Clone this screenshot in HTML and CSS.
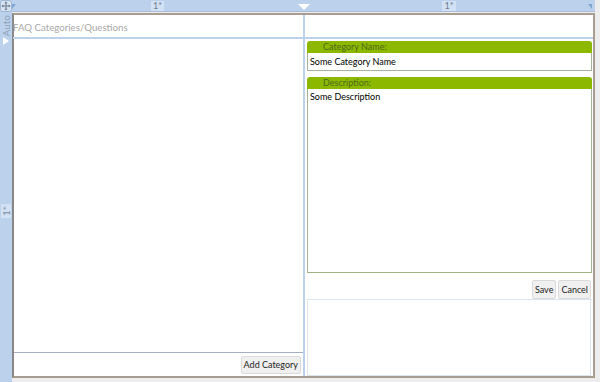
FILE: index.html
```html
<!DOCTYPE html>
<html>
<head>
<meta charset="utf-8">
<link rel="stylesheet" href="styles.css">
</head>
<body>
<div class="designer">
  <div class="corner">
    <svg width="12" height="12" viewBox="0 0 12 12">
      <rect x="0.5" y="0.5" width="11" height="11" rx="2" fill="#d6e3f3" stroke="#9fb6d3"/>
      <path d="M6 2v8M2 6h8" stroke="#6a7a8c" stroke-width="1"/>
      <path d="M6 1.5l-1.6 1.8h3.2zM6 10.5l-1.6-1.8h3.2zM1.5 6l1.8-1.6v3.2zM10.5 6l-1.8-1.6v3.2z" fill="#6a7a8c"/>
    </svg>
  </div>
  <div class="hruler">
    <div class="hcell"><span class="lbl">1*</span></div>
    <div class="hcell"><span class="lbl">1*</span></div>
    <span class="tri tri-start"></span>
    <span class="tri tri-mid"></span>
    <span class="tri tri-end"></span>
  </div>
  <div class="vruler">
    <div class="vcell vauto"><span class="vlbl">Auto</span><span class="vtri"></span></div>
    <div class="vcell vstar"><span class="vlbl">1*</span></div>
  </div>
  <div class="window">
    <div class="wgrid">
      <div class="title">FAQ Categories/Questions</div>
      <div class="title-right"></div>
      <div class="left">
        <div class="list"></div>
        <div class="leftfoot"><button class="btn">Add Category</button></div>
      </div>
      <div class="right">
        <div class="group">
          <div class="ghead">Category Name:</div>
          <div class="gbody short">Some Category Name</div>
        </div>
        <div class="group desc">
          <div class="ghead">Description:</div>
          <div class="gbody tall">Some Description</div>
        </div>
        <div class="actions">
          <button class="btn">Save</button>
          <button class="btn">Cancel</button>
        </div>
        <div class="lower"></div>
      </div>
    </div>
  </div>
</div>
</body>
</html>
```
FILE: styles.css
```css
html, body {
  margin: 0;
  padding: 0;
}
body {
  width: 600px;
  height: 382px;
  background: #ededed;
  font-family: Lato, "Open Sans", sans-serif;
  overflow: hidden;
}
.designer {
  display: grid;
  grid-template-columns: 12px 583px;
  grid-template-rows: 12px 370px;
  width: 600px;
  height: 382px;
}
.corner {
  background: #bcd2ec;
  display: flex;
}
.hruler {
  position: relative;
  background: #bcd2ec;
  border-bottom: 1px solid #aabedb;
  display: grid;
  grid-template-columns: 291px 292px;
  box-sizing: border-box;
}
.hcell {
  display: flex;
  justify-content: center;
  align-items: center;
}
.lbl {
  font-size: 9px;
  line-height: 10px;
  color: #6b7c90;
  background: #d2e1f3;
  padding: 0 2px;
}
.tri {
  position: absolute;
  top: 4px;
  width: 0;
  height: 0;
  border-left: 4px solid transparent;
  border-right: 4px solid transparent;
  border-top: 5px solid #7fa6d3;
}
.tri-mid {
  left: 286px;
  border-left-width: 6px;
  border-right-width: 6px;
  border-top: 6px solid #ffffff;
  top: 4px;
}
.tri-start {
  left: 0;
  border-left: 0;
  border-right: 4px solid transparent;
}
.tri-end {
  left: 576px;
  border-right: 0;
}
.vruler {
  background: #bcd2ec;
  display: grid;
  grid-template-rows: 28px 342px;
}
.vcell {
  display: flex;
  flex-direction: column;
  align-items: center;
  justify-content: center;
}
.vlbl {
  writing-mode: vertical-rl;
  transform: rotate(180deg);
  font-size: 10px;
  color: #7d8ea3;
  line-height: 10px;
}
.vauto {
  justify-content: flex-start;
  padding-top: 3px;
}
.vauto .vlbl {
  color: #8fa2b8;
}
.vtri {
  width: 0;
  height: 0;
  border-top: 4px solid transparent;
  border-bottom: 4px solid transparent;
  border-left: 6px solid #ffffff;
  margin-top: 1px;
}
.vstar .vlbl {
  background: #d2e1f3;
  padding: 2px 0;
}
.window {
  background: #ffffff;
  border: 2px solid #a99c90;
  border-left: 2px solid #8a8886;
  width: 583px;
  height: 365px;
  box-sizing: border-box;
  margin-top: 1px;
}
.wgrid {
  display: grid;
  grid-template-columns: 291px 288px;
  grid-template-rows: 24px 337px;
  height: 100%;
}
.title {
  font-size: 9.7px;
  color: #a8a8a8;
  line-height: 24px;
  border-bottom: 2px solid #bcd2ec;
  border-right: 2px solid #bcd2ec;
  white-space: nowrap;
  margin-left: -1px;
  box-sizing: border-box;
}
.title-right {
  border-bottom: 2px solid #bcd2ec;
}
.left {
  display: flex;
  flex-direction: column;
  border-right: 2px solid #bcd2ec;
}
.list {
  flex: 1;
  border-bottom: 1px solid #a3b1c1;
}
.leftfoot {
  display: flex;
  justify-content: flex-end;
  padding: 3px 2px 2px 0;
}
.btn {
  font-family: Lato, "Open Sans", sans-serif;
  font-size: 9px;
  color: #222;
  background: #f0f0f0;
  border: 1px solid #dadada;
  border-radius: 2px;
  padding: 0 2px;
  height: 18px;
  line-height: 16px;
  margin: 0;
}
.right {
  display: flex;
  flex-direction: column;
  padding: 2px 1px 0 2px;
}
.group {
  display: flex;
  flex-direction: column;
}
.ghead {
  background: #8cb800;
  border-radius: 3px 3px 0 0;
  height: 12px;
  line-height: 12px;
  font-size: 9px;
  color: #4f6a18;
  padding-left: 16px;
}
.gbody {
  border: 1px solid #a6b29a;
  border-top: 0;
  font-size: 9px;
  color: #000;
  padding: 0 2px;
}
.short {
  height: 18px;
  box-sizing: border-box;
  line-height: 17px;
}
.desc {
  margin-top: 6px;
}
.tall {
  height: 184px;
  box-sizing: border-box;
  border-bottom: 1px solid #9fb380;
  line-height: 15px;
}
.actions {
  display: flex;
  justify-content: flex-end;
  gap: 2px;
  margin-top: 7px;
  padding-right: 1px;
  border-bottom: 1px solid #dfe5ec;
  height: 20px;
  box-sizing: border-box;
}
.actions .btn {
  height: 19px;
}
.lower {
  flex: 1;
  border: 1px solid #dfe5ec;
  border-top: 0;
  margin-right: 1px;
}
```
